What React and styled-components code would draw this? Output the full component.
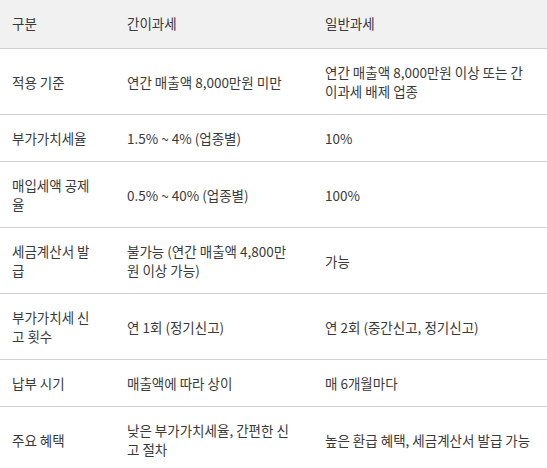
import React from "react";
import styled, { createGlobalStyle } from "styled-components";

const Global = createGlobalStyle`
  html, body { margin: 0; padding: 0; background: #ffffff; }
  body { font-family: "Noto Sans CJK KR", "Noto Sans", sans-serif; }
`;

const Table = styled.table`
  width: 547px;
  border-collapse: collapse;
  table-layout: fixed;
  font-size: 13.5px;
  line-height: 19px;
  color: #3a3a3a;
  word-break: break-all;
`;

const Col = styled.col`
  width: ${(p) => p.$w}px;
`;

const HeadRow = styled.tr`
  background: #f1f1f1;
  border-bottom: 1px solid #cfcfcf;
`;

const HeadCell = styled.th`
  text-align: left;
  font-weight: 400;
  height: 48px;
  box-sizing: border-box;
  padding: 14px ${(p) => p.$pr}px 15px 12px;
  vertical-align: middle;
`;

const Row = styled.tr`
  border-bottom: 1px solid #d2d2d2;
`;

const Cell = styled.td`
  padding: 14px ${(p) => p.$pr}px 13px 12px;
  vertical-align: middle;
`;

const columns = [
  { w: 115, pr: 19 },
  { w: 198, pr: 20 },
  { w: 234, pr: 14 },
];

const head = ["구분", "간이과세", "일반과세"];

const rows = [
  ["적용 기준", "연간 매출액 8,000만원 미만", "연간 매출액 8,000만원 이상 또는 간이과세 배제 업종"],
  ["부가가치세율", "1.5% ~ 4% (업종별)", "10%"],
  ["매입세액 공제율", "0.5% ~ 40% (업종별)", "100%"],
  ["세금계산서 발급", "불가능 (연간 매출액 4,800만원 이상 가능)", "가능"],
  ["부가가치세 신고 횟수", "연 1회 (정기신고)", "연 2회 (중간신고, 정기신고)"],
  ["납부 시기", "매출액에 따라 상이", "매 6개월마다"],
  ["주요 혜택", "낮은 부가가치세율, 간편한 신고 절차", "높은 환급 혜택, 세금계산서 발급 가능"],
];

export default function App() {
  return (
    <>
      <Global />
      <Table>
        <colgroup>
          {columns.map((c, i) => (
            <Col key={i} $w={c.w} />
          ))}
        </colgroup>
        <thead>
          <HeadRow>
            {head.map((h, i) => (
              <HeadCell key={h} $pr={columns[i].pr}>
                {h}
              </HeadCell>
            ))}
          </HeadRow>
        </thead>
        <tbody>
          {rows.map((r) => (
            <Row key={r[0]}>
              {r.map((c, i) => (
                <Cell key={i} $pr={columns[i].pr}>
                  {c}
                </Cell>
              ))}
            </Row>
          ))}
        </tbody>
      </Table>
    </>
  );
}
